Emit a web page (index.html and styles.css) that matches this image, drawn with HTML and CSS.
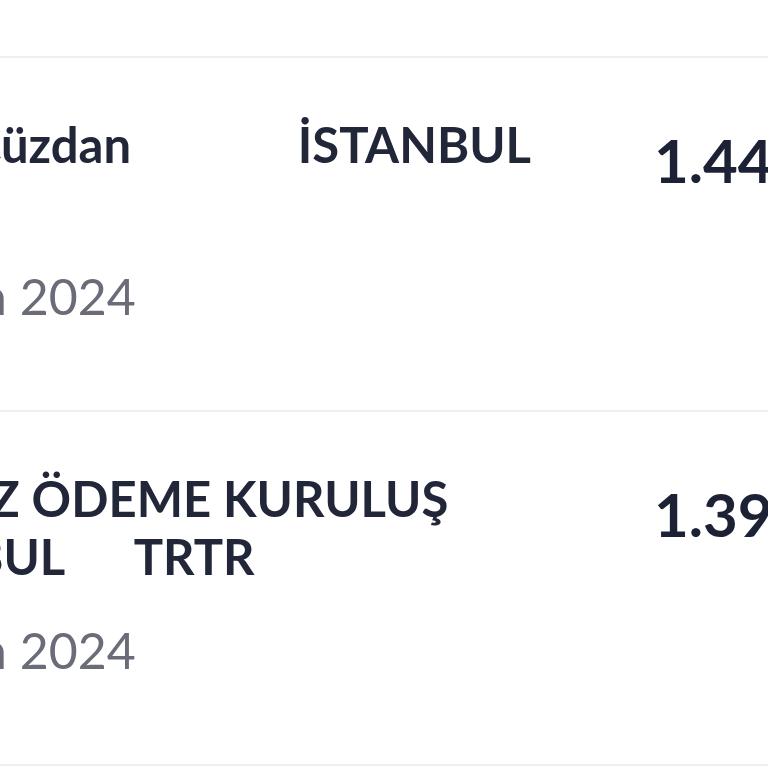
FILE: index.html
```html
<!DOCTYPE html>
<html lang="tr">
<head>
<meta charset="utf-8">
<title>Hesap Hareketleri</title>
<link rel="stylesheet" href="styles.css">
</head>
<body>
<div class="list">
  <div class="row">
    <div class="info">
      <div class="desc">Hepsi Cüzdan              İSTANBUL</div>
      <div class="date">2 Nisan 2024</div>
    </div>
    <div class="amount">1.449,90 TL</div>
  </div>
  <div class="row">
    <div class="info">
      <div class="desc">NET HIZ ÖDEME KURULUŞ İSTANBUL      TRTR</div>
      <div class="date">1 Nisan 2024</div>
    </div>
    <div class="amount">1.399,00 TL</div>
  </div>
</div>
</body>
</html>
```

FILE: styles.css
```css
html, body {
  margin: 0;
  padding: 0;
  background: #ffffff;
  overflow: hidden;
}

body {
  font-family: Lato, "Noto Sans", sans-serif;
  color: #1f2336;
}

.list {
  margin-top: 56px;
  margin-left: -168px;
  width: 1200px;
}

.row {
  display: flex;
  align-items: flex-start;
  gap: 33px;
  border-top: 2px solid #efefef;
  padding: 57px 0 83px;
}

.row:last-child {
  border-bottom: 2px solid #efefef;
}

.info {
  flex: 0 0 789px;
  display: flex;
  flex-direction: column;
}

.desc {
  font-size: 49px;
  font-weight: 700;
  line-height: 58px;
  min-height: 116px;
  white-space: pre-wrap;
  color: #222639;
}

.date {
  margin-top: 34px;
  font-size: 50px;
  line-height: 62px;
  font-weight: 400;
  text-indent: 9px;
  color: #6a6d78;
}

.amount {
  margin-top: 9px;
  font-size: 60px;
  line-height: 72px;
  font-weight: 700;
  white-space: nowrap;
  color: #1c2135;
}
```
